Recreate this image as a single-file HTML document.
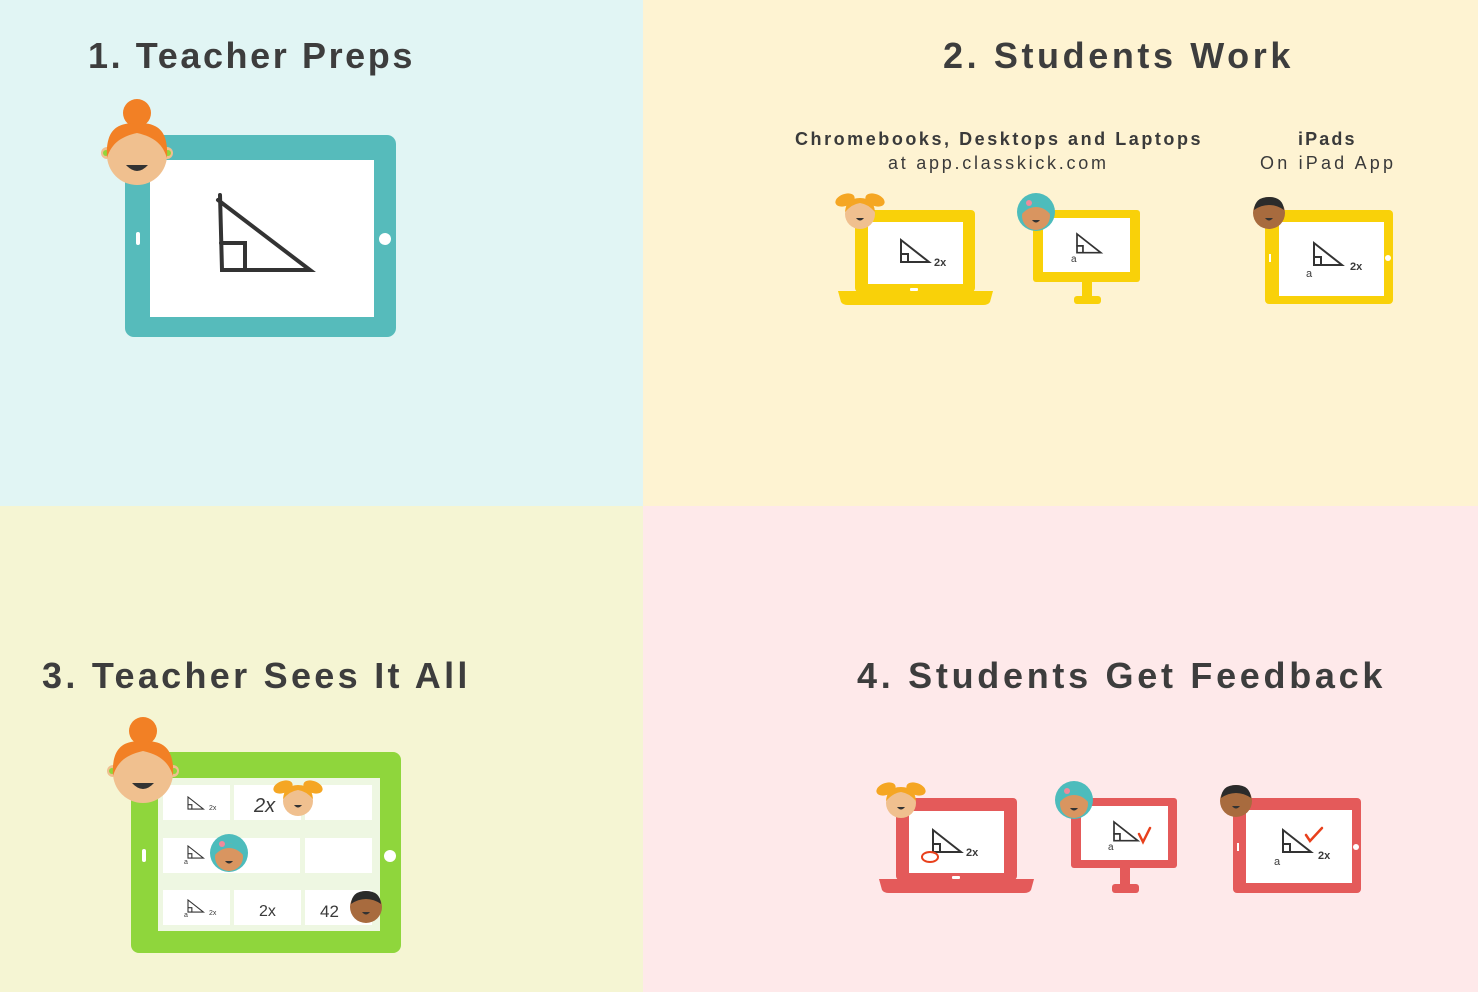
<!DOCTYPE html>
<html><head><meta charset="utf-8"><style>
html,body{margin:0;padding:0;width:1478px;height:992px;overflow:hidden}
svg{display:block}
text{font-family:"Liberation Sans",sans-serif;fill:#3a3a3a}
.t{font-size:36px;font-weight:bold;letter-spacing:2.6px;fill:#3d3d3d}
</style></head><body>
<svg width="1478" height="992" viewBox="0 0 1478 992" xmlns="http://www.w3.org/2000/svg">
<defs>
<g id="teacher">
 <circle cx="0" cy="-42" r="14" fill="#f28025"/>
 <circle cx="-30" cy="-2" r="6" fill="#f0c08f"/><circle cx="30" cy="-2" r="6" fill="#f0c08f"/>
 <circle cx="-31" cy="-2" r="3" fill="#8fd63c"/><circle cx="31" cy="-2" r="3" fill="#8fd63c"/>
 <circle cx="0" cy="0" r="30" fill="#f0c08f"/>
 <path d="M-30,3 C-32,-30 -15,-32 0,-32 C15,-32 32,-30 30,3 C26,-10 18,-18 0,-22 C-18,-18 -26,-10 -30,3Z" fill="#f28025"/>
 <path d="M-11,10 Q0,22 11,10Z" fill="#333"/>
</g>
<g id="girl">
 <ellipse cx="-15" cy="-14" rx="10" ry="6" fill="#f5a623" transform="rotate(-20 -15 -14)"/>
 <ellipse cx="15" cy="-14" rx="10" ry="6" fill="#f5a623" transform="rotate(20 15 -14)"/>
 <circle cx="0" cy="0" r="15" fill="#f0c08f"/>
 <path d="M-15,-2 Q-14,-16 0,-16 Q14,-16 15,-2 Q8,-10 0,-11 Q-8,-10 -15,-2Z" fill="#f5a623"/>
 <path d="M-4,4 Q0,9 4,4Z" fill="#333"/>
</g>
<g id="teal">
 <circle cx="0" cy="-2" r="19" fill="#4dbcbc"/>
 <circle cx="0" cy="2" r="14" fill="#d99560"/>
 <path d="M-14,0 Q-12,-12 0,-12 Q12,-12 14,0 Q8,-7 0,-7 Q-8,-7 -14,0Z" fill="#4dbcbc"/>
 <circle cx="-7" cy="-11" r="3" fill="#f08a9a"/>
 <path d="M-4,6 Q0,11 4,6Z" fill="#333"/>
</g>
<g id="boy">
 <circle cx="0" cy="0" r="16" fill="#a86b3e"/>
 <path d="M-15,-3 Q-14,-16 0,-16 Q14,-16 15,-3 Q8,-8 0,-8 Q-8,-8 -15,-3Z" fill="#2b2b2b"/>
 <path d="M-4,5 Q0,10 4,5Z" fill="#333"/>
</g>
<g id="tri" fill="none" stroke="#333" stroke-width="2" stroke-linecap="round">
 <path d="M0,0 L0,22 L28,22 Z"/><path d="M0,14 L7,14 L7,22"/>
</g>
</defs>

<rect x="0" y="0" width="643" height="506" fill="#e1f5f4"/>
<rect x="643" y="0" width="835" height="506" fill="#fef3d2"/>
<rect x="0" y="506" width="643" height="486" fill="#f5f5d3"/>
<rect x="643" y="506" width="835" height="486" fill="#fee9ea"/>

<text class="t" x="88" y="68" textLength="327">1. Teacher Preps</text>
<text class="t" x="943" y="68" textLength="350">2. Students Work</text>
<text class="t" x="42" y="688" textLength="428">3. Teacher Sees It All</text>
<text class="t" x="857" y="688" textLength="528">4. Students Get Feedback</text>

<text x="795" y="145" font-size="18" letter-spacing="1.5" font-weight="bold" textLength="407">Chromebooks, Desktops and Laptops</text>
<text x="888" y="169" font-size="18" letter-spacing="2" textLength="220">at app.classkick.com</text>
<text x="1298" y="145" font-size="18" letter-spacing="1.5" font-weight="bold" textLength="58">iPads</text>
<text x="1260" y="169" font-size="18" letter-spacing="2" textLength="135">On iPad App</text>

<!-- TL tablet -->
<rect x="125" y="135" width="271" height="202" rx="9" fill="#56bbbb"/>
<rect x="150" y="160" width="224" height="157" fill="#fff"/>
<circle cx="385" cy="239" r="6" fill="#fff"/>
<rect x="136" y="232" width="4" height="13" rx="2" fill="#fff"/>
<g fill="none" stroke="#333" stroke-width="4" stroke-linecap="round">
 <path d="M220,195 L222,270 L310,270 L218,200"/><path d="M221,243 L245,243 L245,268"/>
</g>
<use href="#teacher" x="137" y="155"/>

<!-- TR laptop -->
<rect x="855" y="210" width="120" height="82" rx="4" fill="#f9d109"/>
<rect x="868" y="222" width="95" height="62" fill="#fff"/>
<path d="M838,291 L993,291 L990,302 Q988,305 983,305 L848,305 Q843,305 841,302Z" fill="#f9d109"/>
<rect x="910" y="288" width="8" height="3" rx="1" fill="#fff"/>
<use href="#tri" x="901" y="240"/>
<text x="934" y="266" font-size="11" font-weight="bold">2x</text>
<use href="#girl" x="860" y="214"/>
<!-- TR monitor -->
<rect x="1033" y="210" width="107" height="72" rx="3" fill="#f9d109"/>
<rect x="1043" y="218" width="87" height="54" fill="#fff"/>
<rect x="1082" y="280" width="10" height="18" fill="#f9d109"/>
<rect x="1074" y="296" width="27" height="8" rx="3" fill="#f9d109"/>
<use href="#tri" transform="translate(1077,234) scale(0.85)"/>
<text x="1071" y="262" font-size="10">a</text>
<use href="#teal" x="1036" y="214"/>
<!-- TR ipad -->
<rect x="1265" y="210" width="128" height="94" rx="4" fill="#f9d109"/>
<rect x="1279" y="222" width="105" height="74" fill="#fff"/>
<circle cx="1388" cy="258" r="3" fill="#fff"/><rect x="1269" y="254" width="2" height="8" fill="#fff"/>
<use href="#tri" x="1314" y="243"/>
<text x="1306" y="277" font-size="11">a</text>
<text x="1350" y="270" font-size="11" font-weight="bold">2x</text>
<use href="#boy" x="1269" y="213"/>

<!-- BL green tablet -->
<rect x="131" y="752" width="270" height="201" rx="8" fill="#8fd63c"/>
<rect x="158" y="778" width="222" height="153" fill="#eef7e2"/>
<circle cx="390" cy="856" r="6" fill="#fff"/>
<rect x="142" y="849" width="4" height="13" rx="2" fill="#fff"/>
<g fill="#fff">
 <rect x="163" y="785" width="67" height="35"/><rect x="234" y="785" width="67" height="35"/><rect x="305" y="785" width="67" height="35"/>
 <rect x="163" y="838" width="137" height="35"/><rect x="305" y="838" width="67" height="35"/>
 <rect x="163" y="890" width="67" height="35"/><rect x="234" y="890" width="67" height="35"/><rect x="305" y="890" width="67" height="35"/>
</g>
<use href="#tri" transform="translate(188,797) scale(0.55)"/><text x="209" y="810" font-size="7">2x</text>
<text x="254" y="812" font-size="20" font-style="italic">2x</text>
<use href="#tri" transform="translate(188,846) scale(0.55)"/><text x="184" y="864" font-size="7">a</text>
<use href="#tri" transform="translate(188,900) scale(0.55)"/><text x="184" y="917" font-size="7">a</text><text x="209" y="915" font-size="7">2x</text>
<text x="259" y="916" font-size="16">2x</text>
<text x="320" y="917" font-size="17">42</text>
<use href="#girl" x="298" y="801"/>
<use href="#teal" x="229" y="855"/>
<use href="#boy" x="366" y="907"/>
<use href="#teacher" x="143" y="773"/>

<!-- BR laptop -->
<rect x="896" y="798" width="121" height="82" rx="4" fill="#e45a5a"/>
<rect x="909" y="811" width="95" height="62" fill="#fff"/>
<path d="M879,879 L1034,879 L1031,890 Q1029,893 1024,893 L889,893 Q884,893 882,890Z" fill="#e45a5a"/>
<rect x="952" y="876" width="8" height="3" rx="1" fill="#fff"/>
<use href="#tri" x="933" y="830"/>
<text x="966" y="856" font-size="11" font-weight="bold">2x</text>
<ellipse cx="930" cy="857" rx="8" ry="5" fill="none" stroke="#e8401c" stroke-width="2"/>
<use href="#girl" x="901" y="803"/>
<!-- BR monitor -->
<rect x="1071" y="798" width="106" height="70" rx="3" fill="#e45a5a"/>
<rect x="1081" y="806" width="87" height="54" fill="#fff"/>
<rect x="1120" y="866" width="10" height="20" fill="#e45a5a"/>
<rect x="1112" y="884" width="27" height="9" rx="3" fill="#e45a5a"/>
<use href="#tri" transform="translate(1114,822) scale(0.85)"/>
<text x="1108" y="850" font-size="10">a</text>
<path d="M1139,834 L1143,842 L1150,828" fill="none" stroke="#e8401c" stroke-width="2.5" stroke-linecap="round"/>
<use href="#teal" x="1074" y="802"/>
<!-- BR ipad -->
<rect x="1233" y="798" width="128" height="95" rx="4" fill="#e45a5a"/>
<rect x="1246" y="810" width="106" height="73" fill="#fff"/>
<circle cx="1356" cy="847" r="3" fill="#fff"/><rect x="1237" y="843" width="2" height="8" fill="#fff"/>
<use href="#tri" x="1283" y="830"/>
<text x="1274" y="865" font-size="11">a</text>
<text x="1318" y="859" font-size="11" font-weight="bold">2x</text>
<path d="M1306,835 L1310,841 L1322,828" fill="none" stroke="#e8401c" stroke-width="2.5" stroke-linecap="round"/>
<use href="#boy" x="1236" y="801"/>
</svg>
</body></html>
